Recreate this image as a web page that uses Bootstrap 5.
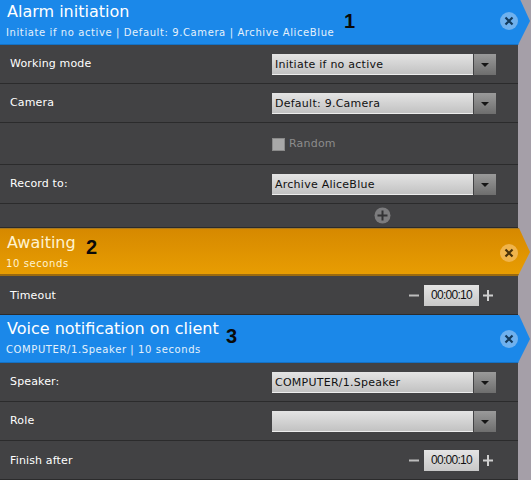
<!DOCTYPE html>
<html lang="en">
<head>
    <meta charset="UTF-8">
    <title>Macro actions</title>
    <link href="https://cdn.jsdelivr.net/npm/bootstrap@5.3.0/dist/css/bootstrap.min.css" rel="stylesheet">
    <style>
        html, body { height: 480px; overflow: hidden; }
        body { background: #a59fa8; font-family: "DejaVu Sans", sans-serif; color: #fff; }
        .action-list { width: 518px; position: relative; }
        .step-head { width: 531px; height: 48px; padding: 4px 0 0 7px; position: relative; clip-path: polygon(0 0, 519px 0, 530px 50%, 518px 100%, 0 100%); }
        .step-blue { background: #1b88e9; border-bottom: 1px solid #1471c4; }
        .step-orange { background: linear-gradient(#d68900, #e89d02); border-bottom: 2px solid #9a6a10; border-top: 1px solid #a87a20; }
        .step-first { margin-top: -3px; padding-top: 5px; }
        .step-title { font-size: 16px; line-height: 20px; }
        .step-sub { font-size: 10px; line-height: 14px; letter-spacing: .6px; margin: 4px 0 0 -1px; color: #e4f1fb; }
        .step-orange .step-title, .step-orange .step-sub { color: #fff3d0; }
        .close-dot { width: 18px; height: 18px; border-radius: 50%; background: #6fb1ee; right: 13px; top: 15px; position: absolute; }
        .step-orange .close-dot { background: #f0b44c; }
        .field-row { height: 39px; background: #424244; border-bottom: 1px solid #2b2b2c; font-size: 11px; letter-spacing: .15px; }
        .field-tall { height: 42px; }
        .field-label { width: 272px; padding-left: 10px; }
        .label-low { padding-top: 3px; }
        .combo-text { width: 201px; height: 21px; margin-top: 1px; line-height: 21px; padding-left: 3px; color: #111; background: linear-gradient(#e4e4e4, #c2c2c2); border-bottom: 1px solid #ededed; letter-spacing: .25px; }
        .combo-btn { width: 22px; height: 21px; margin: 1px 0 0 1px; background: linear-gradient(#9a9a9a, #6e6e6e); }
        .combo-arrow { width: 0; height: 0; border-left: 4px solid transparent; border-right: 4px solid transparent; border-top: 4px solid #151515; }
        .check-box { width: 13px; height: 13px; margin-top: 2px; background: #a8a8a8; border: 1px solid #8a8a8a; }
        .check-text { color: #8c8c8c; margin: 2px 0 0 4px; letter-spacing: .2px; }
        .add-row { height: 24px; background: #424244; border-bottom: 1px solid #2b2b2c; padding-left: 374px; }
        .time-box { width: 55px; height: 21px; margin: 1px 0 0; line-height: 21px; background: linear-gradient(#e4e4e4, #c8c8c8); color: #111; font-family: "Liberation Sans", sans-serif; font-size: 12px; text-align: center; letter-spacing: -.7px; }
        .time-wrap { margin-left: auto; margin-right: 25px; gap: 5px; }
        .time-wrap svg { margin-top: 1px; }
        .time-wrap svg:last-child { margin-left: -1px; }
        .note-num { position: absolute; font-family: "Liberation Sans", sans-serif; font-weight: 700; font-size: 20px; line-height: 20px; color: #0a0a0a; }
    </style>
</head>
<body class="m-0">
    <div class="action-list">
        <!-- Alarm initiation -->
        <div class="step-head step-blue step-first">
            <div class="step-title">Alarm initiation</div>
            <div class="step-sub">Initiate if no active | Default: 9.Camera | Archive AliceBlue</div>
            <svg class="close-dot" viewBox="0 0 18 18"><path d="M5.5 5.5l7 7M12.5 5.5l-7 7" stroke="#123a5c" stroke-width="2.2"/></svg>
        </div>
        <div class="field-row d-flex align-items-center">
            <div class="field-label">Working mode</div>
            <div class="combo-text">Initiate if no active</div>
            <div class="combo-btn d-flex align-items-center justify-content-center"><div class="combo-arrow"></div></div>
        </div>
        <div class="field-row d-flex align-items-center">
            <div class="field-label">Camera</div>
            <div class="combo-text">Default: 9.Camera</div>
            <div class="combo-btn d-flex align-items-center justify-content-center"><div class="combo-arrow"></div></div>
        </div>
        <div class="field-row field-tall d-flex align-items-center">
            <div class="field-label"></div>
            <div class="check-box"></div>
            <div class="check-text">Random</div>
        </div>
        <div class="field-row d-flex align-items-center">
            <div class="field-label">Record to:</div>
            <div class="combo-text">Archive AliceBlue</div>
            <div class="combo-btn d-flex align-items-center justify-content-center"><div class="combo-arrow"></div></div>
        </div>
        <div class="add-row d-flex align-items-center">
            <svg width="17" height="17" viewBox="0 0 17 17"><circle cx="8.5" cy="8.5" r="8" fill="#7c7c7e"/><path d="M8.5 3.5v10M3.5 8.5h10" stroke="#333335" stroke-width="2"/></svg>
        </div>

        <!-- Awaiting -->
        <div class="step-head step-orange">
            <div class="step-title">Awaiting</div>
            <div class="step-sub">10 seconds</div>
            <svg class="close-dot" viewBox="0 0 18 18"><path d="M5.5 5.5l7 7M12.5 5.5l-7 7" stroke="#4a3208" stroke-width="2.2"/></svg>
        </div>
        <div class="field-row d-flex align-items-center">
            <div class="field-label label-low">Timeout</div>
            <div class="time-wrap d-flex align-items-center">
                <svg width="10" height="11" viewBox="0 0 10 11"><path d="M0 5.5h10" stroke="#bdbdbd" stroke-width="2"/></svg>
                <div class="time-box">00:00:10</div>
                <svg width="10" height="11" viewBox="0 0 10 11"><path d="M0 5.5h10M5 0v11" stroke="#cfcfcf" stroke-width="2"/></svg>
            </div>
        </div>

        <!-- Voice notification on client -->
        <div class="step-head step-blue">
            <div class="step-title">Voice notification on client</div>
            <div class="step-sub">COMPUTER/1.Speaker | 10 seconds</div>
            <svg class="close-dot" viewBox="0 0 18 18"><path d="M5.5 5.5l7 7M12.5 5.5l-7 7" stroke="#123a5c" stroke-width="2.2"/></svg>
        </div>
        <div class="field-row d-flex align-items-center">
            <div class="field-label">Speaker:</div>
            <div class="combo-text">COMPUTER/1.Speaker</div>
            <div class="combo-btn d-flex align-items-center justify-content-center"><div class="combo-arrow"></div></div>
        </div>
        <div class="field-row d-flex align-items-center">
            <div class="field-label">Role</div>
            <div class="combo-text"></div>
            <div class="combo-btn d-flex align-items-center justify-content-center"><div class="combo-arrow"></div></div>
        </div>
        <div class="field-row d-flex align-items-center">
            <div class="field-label label-low">Finish after</div>
            <div class="time-wrap d-flex align-items-center">
                <svg width="10" height="11" viewBox="0 0 10 11"><path d="M0 5.5h10" stroke="#bdbdbd" stroke-width="2"/></svg>
                <div class="time-box">00:00:10</div>
                <svg width="10" height="11" viewBox="0 0 10 11"><path d="M0 5.5h10M5 0v11" stroke="#cfcfcf" stroke-width="2"/></svg>
            </div>
        </div>

        <!-- callout numbers -->
        <div class="note-num" style="left:344px;top:14px">1</div>
        <div class="note-num" style="left:86px;top:240px">2</div>
        <div class="note-num" style="left:226px;top:329px">3</div>
    </div>
    <script src="https://cdn.jsdelivr.net/npm/bootstrap@5.3.0/dist/js/bootstrap.bundle.min.js"></script>
</body>
</html>
